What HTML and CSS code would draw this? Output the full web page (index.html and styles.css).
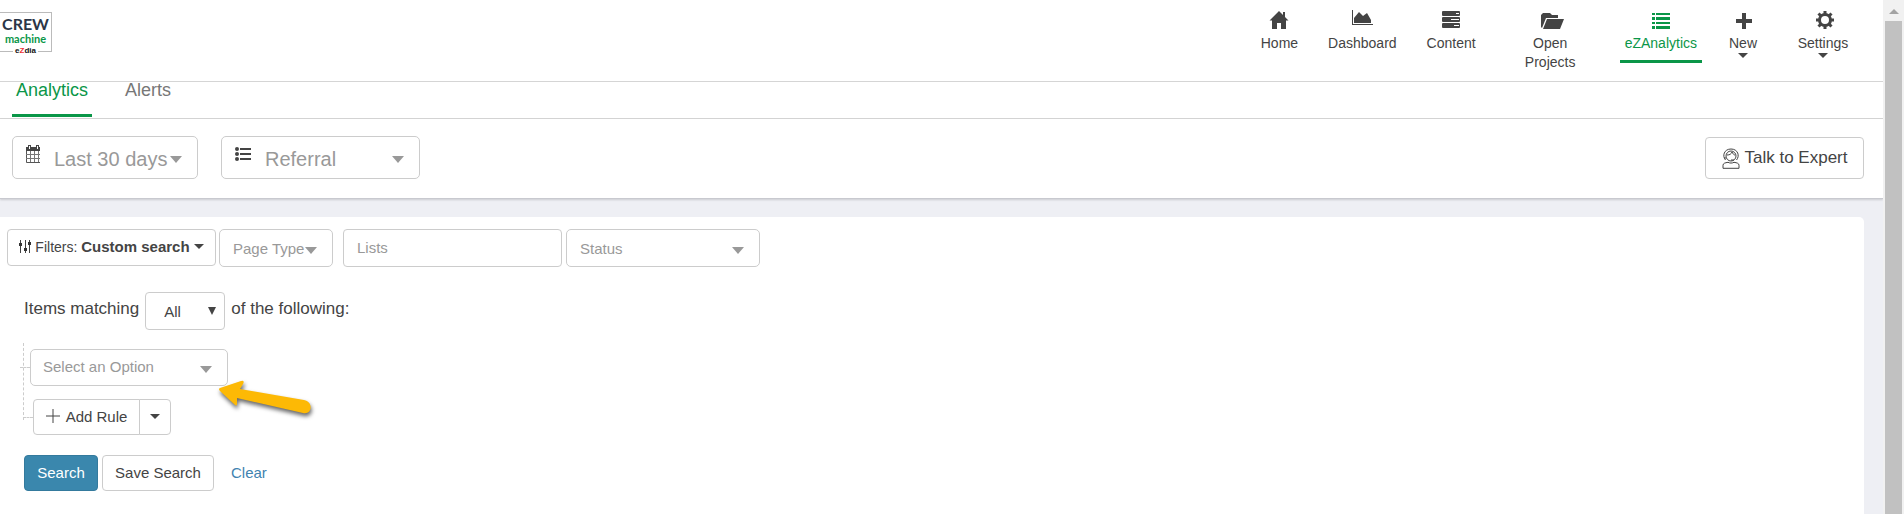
FILE: index.html
```html
<!DOCTYPE html>
<html lang="en">
<head>
    <meta charset="UTF-8">
    <meta name="viewport" content="width=device-width, initial-scale=1.0">
    <title>CREW Machine - Analytics</title>
    <link rel="stylesheet" href="styles.css">
</head>
<body>

    <div class="page">
        <!-- Header -->
        <header class="header">
            <a href="#" class="logo">
                <span class="logo-crew">CREW</span>
                <span class="logo-machine">machine</span>
                <span class="logo-ezdia">e<b>Z</b>dia</span>
            </a>
            <nav class="nav">
                <a href="#" class="nav-item">
                    <svg class="nav-icon" width="20" height="20" viewBox="0 0 20 20"><path d="M10 1L0.500 10.500H3V19H8V13H12V19H17V10.500H19.500L16 7V2H14V5Z"/></svg>
                    Home
                </a>
                <a href="#" class="nav-item">
                    <svg class="nav-icon" width="22" height="20" viewBox="0 0 22 20"><path d="M1 0H2V14H22V15H1ZM3 13V8L8 2L12 6L16 3L20 10V13Z"/></svg>
                    Dashboard
                </a>
                <a href="#" class="nav-item">
                    <svg class="nav-icon" width="20" height="20" viewBox="0 0 20 20"><rect x="1" y="1" width="18" height="5" rx="1"/><rect x="1" y="7" width="18" height="5" rx="1"/><rect x="1" y="13" width="18" height="5" rx="1"/><path class="cut" d="M15 3h3v1h-3zM10 9h8v1h-8zM13 15h5v1h-5z"/></svg>
                    Content
                </a>
                <a href="#" class="nav-item nav-projects">
                    <svg class="nav-icon folder" width="24" height="20" viewBox="0 0 24 20"><path d="M1 17V5L3 3H10L12 5H18V8H6L2 18ZM7 9H24L20 19H3Z"/></svg>
                    Open<br>Projects
                </a>
                <a href="#" class="nav-item active">
                    <svg class="nav-icon" width="20" height="20" viewBox="0 0 20 20"><path d="M1 3h3v2H1zM5 3h14v2H5zM1 7h3v3H1zM5 7h14v3H5zM1 12h3v2H1zM5 12h14v2H5zM1 16h3v3H1zM5 16h14v3H5z"/></svg>
                    eZAnalytics
                </a>
                <a href="#" class="nav-item nav-new">
                    <svg class="nav-icon" width="20" height="20" viewBox="0 0 20 20"><path d="M9 3h4v6h6v4h-6v6H9v-6H3V9h6z"/></svg>
                    New
                    <span class="caret"></span>
                </a>
                <a href="#" class="nav-item nav-settings">
                    <svg class="nav-icon gear" width="20" height="20" viewBox="0 0 20 20"><circle cx="10" cy="10" r="5.500"/><path d="M10 1v4M10 15v4M1 10h4M15 10h4M3.500 3.500l3 3M13.500 13.500l3 3M3.500 16.500l3-3M13.500 6.500l3-3"/></svg>
                    Settings
                    <span class="caret"></span>
                </a>
            </nav>
        </header>

        <!-- Tabs -->
        <div class="tabs">
            <a href="#" class="tab active">Analytics</a>
            <a href="#" class="tab">Alerts</a>
        </div>

        <!-- Period and source -->
        <div class="toolbar">
            <div class="big-select period">
                <svg width="14" height="18" viewBox="0 0 14 18"><path fill="#fff" stroke="#555" d="M.5 3.500H14M.5 3v14.500H14"/><path fill="#444" d="M0 2h14v4H0zM2 0h3v4H2zM10 0h3v4h-3z"/><path fill="#fff" d="M3 1h1v3H3zM11 1h1v3h-1z"/><path fill="none" stroke="#777" d="M4.500 6v11M8.500 6v11M12.500 6v11M0 9.500h14M0 13.500h14"/></svg>
                <select aria-label="Period"><option>Last 30 days</option></select>
                <span class="arrow"></span>
            </div>
            <div class="big-select source">
                <svg width="16" height="14" viewBox="0 0 16 14" fill="#444"><circle cx="2" cy="2" r="2"/><circle cx="2" cy="7" r="2"/><circle cx="2" cy="12" r="2"/><path d="M5 1h11v2H5zM5 6h11v2H5zM5 11h11v2H5z"/></svg>
                <select aria-label="Source"><option>Referral</option></select>
                <span class="arrow"></span>
            </div>
            <button class="btn expert">
                <svg width="18" height="21" viewBox="0 0 18 21" fill="none" stroke="#444"><path d="M3.500 12C0 8 2 1 9 1s9 7 5.500 11"/><circle cx="9" cy="8" r="5"/><path d="M5 7c3 0 4-1 5-3c1 2 2 3 3 3M3 9v2M9 12h3M1 20.300v-3c0-2 2-2.500 5-3c2 1 4 1 6 0c3 .5 5 1 5 3v3z"/></svg>
                <span>Talk to Expert</span>
            </button>
        </div>

        <!-- Search panel -->
        <main class="panel">
            <div class="filters">
                <button class="btn filter-btn">
                    <svg width="12" height="13" viewBox="0 0 12 13"><path stroke="#444" fill="none" d="M1.500 0v13M6.500 0v13M10.500 0v13"/><path fill="#333" d="M0 3h3v3H0zM5 8h3v3H5zM9 2h3v3H9z"/></svg>
                    <span>Filters: <b>Custom search</b></span>
                    <span class="caret"></span>
                </button>
                <div class="select page-type">
                    <select aria-label="Page type"><option>Page Type</option></select>
                    <span class="arrow"></span>
                </div>
                <input type="text" class="lists" placeholder="Lists" aria-label="Lists">
                <div class="select status">
                    <select aria-label="Status"><option>Status</option></select>
                    <span class="arrow"></span>
                </div>
            </div>

            <div class="matching">
                <label for="match">Items matching</label>
                <div class="match-select">
                    <select id="match"><option>All</option></select>
                    <svg width="8" height="8" viewBox="0 0 8 8"><path fill="#444" d="M0 0h8L4 8z"/></svg>
                </div>
                <span>of the following:</span>
            </div>

            <div class="rules">
                <div class="rule">
                    <div class="select option">
                        <select aria-label="Rule"><option>Select an Option</option></select>
                        <span class="arrow"></span>
                    </div>
                    <svg class="pointer" width="100" height="46" viewBox="0 0 100 46"><path d="M2 8L23 1Q27 0 25 4L22 9L86 20C96 22 94 35 85 33L19 18V24Q19 27 16 24L2 11Q0 9 2 8Z"/></svg>
                </div>
                <div class="add-rule">
                    <button class="btn add-btn">
                        <svg width="14" height="14" viewBox="0 0 14 14"><path stroke="#444" d="M7 0v14M0 7h14"/></svg>
                        Add Rule
                    </button>
                    <button class="btn add-more" aria-label="More rules"><span class="caret"></span></button>
                </div>
            </div>

            <div class="actions">
                <button class="btn search-btn">Search</button>
                <button class="btn save-btn">Save Search</button>
                <a href="#" class="clear">Clear</a>
            </div>
        </main>
    </div>

    <div class="scrollbar">
        <span class="scroll-up"></span>
        <div class="thumb"></div>
    </div>

</body>
</html>
```
FILE: styles.css
```css
* {
    margin: 0;
    padding: 0;
    box-sizing: border-box;
}
body {
    display: flex;
    min-height: 100vh;
    background-color: #eeeff4;
    color: #444;
    font-family: "Liberation Sans", Arial, sans-serif;
    font-size: 15px;
}
a {
    text-decoration: none;
}
button, input, select {
    font-family: inherit;
    font-size: 15px;
    color: inherit;
}
.page {
    flex: 1;
    display: flex;
    flex-direction: column;
}

/* header */
.header {
    display: flex;
    justify-content: space-between;
    height: 82px;
    padding-right: 21px;
    background: #fff;
    border-bottom: 1px solid #d5d5d5;
}
.logo {
    display: flex;
    flex-direction: column;
    align-items: center;
    width: 52px;
    height: 40px;
    margin-top: 12px;
    border: 1px solid #bbb;
    border-left: none;
    font-family: Lato, sans-serif;
    font-weight: bold;
}
.logo-crew {
    margin-top: 2px;
    font-size: 16px;
    line-height: 18px;
    color: #2b3647;
}
.logo-machine {
    font-size: 11px;
    line-height: 11px;
    color: #0a9648;
}
.logo-ezdia {
    padding: 0 2px;
    margin-top: 1px;
    background: #fff;
    font-family: "Liberation Sans", Arial, sans-serif;
    font-size: 8px;
    line-height: 12px;
    color: #111;
}
.logo-ezdia b {
    color: #e33;
}
.nav {
    display: flex;
    align-items: flex-start;
    gap: 20px;
    padding-top: 10px;
}
.nav-item {
    display: flex;
    flex-direction: column;
    align-items: center;
    padding: 0 5px;
    color: #444;
    font-size: 14px;
    line-height: 19px;
    text-align: center;
}
.nav-item.active {
    padding-bottom: 7px;
    border-bottom: 3px solid #0a9648;
    color: #0a9648;
}
.nav-icon {
    margin-bottom: 4px;
    fill: currentColor;
}
.nav-icon .cut {
    fill: #fff;
}
.nav-icon.folder {
    margin-left: 4px;
}
.nav-icon.gear {
    margin-left: 4px;
    fill: none;
    stroke: #444;
    stroke-width: 3;
}
.nav-projects {
    width: 99px;
}
.nav-new {
    width: 42px;
}
.nav-settings {
    width: 78px;
}
.caret {
    border-top: 5px solid #444;
    border-left: 5px solid transparent;
    border-right: 5px solid transparent;
}

/* tabs */
.tabs {
    display: flex;
    gap: 29px;
    height: 37px;
    padding-left: 12px;
    background: #fff;
    border-bottom: 1px solid #d5d5d5;
}
.tab {
    padding: 0 4px;
    margin-bottom: 1px;
    color: #777;
    font-size: 18px;
    line-height: 16px;
}
.tab.active {
    width: 80px;
    border-bottom: 3px solid #0a9648;
    color: #0a9648;
}

/* toolbar */
.toolbar {
    display: flex;
    align-items: flex-start;
    gap: 23px;
    height: 80px;
    padding: 17px 19px 0 12px;
    background: #fff;
    border-bottom: 1px solid #c8c9cf;
    box-shadow: 0 1px 2px rgba(0, 0, 0, 0.15);
}
.big-select, .select {
    display: flex;
    align-items: center;
    background: #fff;
    border: 1px solid #ccc;
    border-radius: 5px;
    color: #999;
}
.big-select {
    height: 43px;
    padding-right: 15px;
}
.big-select svg {
    margin: 0 14px 8px 13px;
}
select {
    flex: 1;
    min-width: 0;
    height: 100%;
    appearance: none;
    border: none;
    background: transparent;
    outline: none;
}
.big-select select {
    font-size: 20px;
    padding-top: 2px;
}
.period {
    width: 186px;
}
.source {
    width: 199px;
}
.arrow {
    margin-top: 4px;
    border-top: 7px solid #999;
    border-left: 6px solid transparent;
    border-right: 6px solid transparent;
}
.btn {
    display: flex;
    align-items: center;
    justify-content: center;
    height: 36px;
    padding-bottom: 2px;
    background: #fff;
    border: 1px solid #ccc;
    border-radius: 4px;
    cursor: pointer;
    white-space: nowrap;
}
.expert {
    width: 159px;
    height: 42px;
    margin: 1px 0 0 auto;
    padding: 0;
    gap: 5px;
    font-size: 17px;
}

/* panel */
.panel {
    flex: 1;
    margin: 18px 19px 0 0;
    padding: 12px 0 22px 7px;
    background: #fff;
    border-radius: 0 5px 0 0;
}
.filters {
    display: flex;
    gap: 3px;
}
.filter-btn {
    width: 209px;
    height: 37px;
    gap: 4px;
    font-size: 14px;
}
.filter-btn b {
    font-size: 15px;
}
.select {
    height: 38px;
    padding: 0 15px 0 13px;
}
.page-type {
    width: 114px;
}
.lists {
    width: 219px;
    height: 38px;
    margin-left: 7px;
    padding: 0 13px 1px;
    border: 1px solid #ccc;
    border-radius: 4px;
}
.lists::placeholder {
    color: #999;
}
.status {
    width: 194px;
    margin-left: 1px;
}
.matching {
    display: flex;
    align-items: center;
    gap: 6px;
    margin: 25px 0 0 17px;
    font-size: 17px;
}
.matching label, .matching span {
    padding-bottom: 4px;
}
.match-select {
    display: flex;
    align-items: center;
    width: 80px;
    height: 38px;
    padding: 0 8px 0 18px;
    border: 1px solid #ccc;
    border-radius: 4px;
}
.rules {
    position: relative;
    margin: 13px 0 0 16px;
    padding-top: 6px;
}
.rules::before {
    content: "";
    position: absolute;
    top: 0;
    left: 0;
    height: 77px;
    border-left: 1px dashed #ccc;
}
.rule, .add-rule {
    display: flex;
    align-items: center;
}
.rule::before, .add-rule::before {
    content: "";
    width: 10px;
    border-top: 1px dashed #ccc;
}
.rule {
    position: relative;
    margin-left: -3px;
}
.option {
    width: 198px;
    height: 37px;
    padding-left: 12px;
}
.option select {
    padding-bottom: 2px;
}
.pointer {
    position: absolute;
    left: 198px;
    top: 31px;
    fill: #fdb905;
    filter: drop-shadow(1px 3px 2px rgba(0, 0, 0, 0.6));
}
.add-rule {
    margin-top: 13px;
}
.add-btn {
    width: 107px;
    gap: 6px;
    border-radius: 4px 0 0 4px;
}
.add-more {
    width: 32px;
    margin-left: -1px;
    border-radius: 0 4px 4px 0;
}
.actions {
    display: flex;
    align-items: center;
    gap: 4px;
    margin: 20px 0 0 17px;
}
.search-btn {
    width: 74px;
    background: #3a87ad;
    border-color: #347a9d;
    color: #fff;
}
.save-btn {
    width: 112px;
}
.clear {
    margin-left: 13px;
    padding-bottom: 2px;
    color: #4183b0;
}

/* scrollbar */
.scrollbar {
    display: flex;
    flex-direction: column;
    align-items: center;
    width: 21px;
    background: #f1f1f1;
}
.scroll-up {
    margin: 9px 0 7px;
    border-bottom: 5px solid #a3a3a3;
    border-left: 5px solid transparent;
    border-right: 5px solid transparent;
}
.thumb {
    flex: 1;
    width: 17px;
    background: #c1c1c1;
}
```
